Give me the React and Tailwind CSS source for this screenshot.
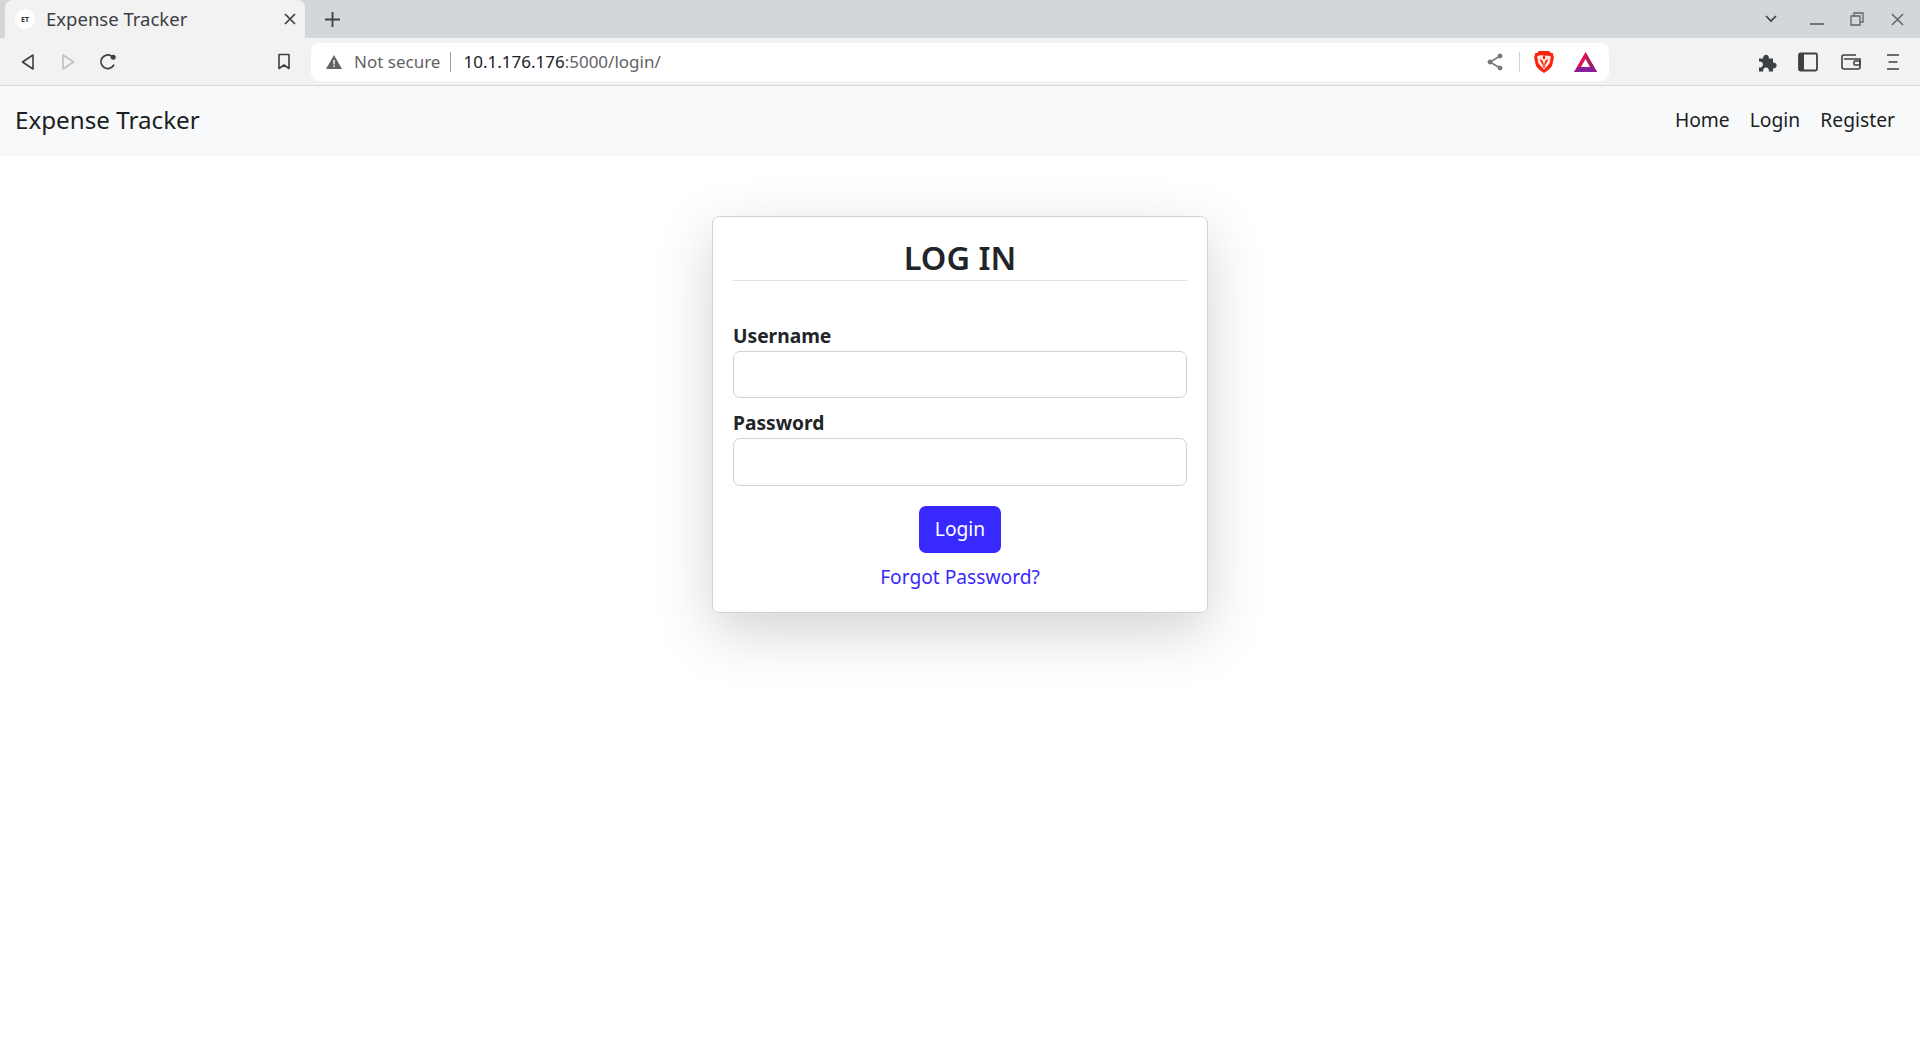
import React from "react";

const Back = () => (
  <svg width="16" height="18" viewBox="0 0 16 18" fill="none" stroke="#3c4043" strokeWidth="1.6" strokeLinejoin="round"><path d="M13 2 2.5 9 13 16Z" /></svg>
);
const Forward = () => (
  <svg width="16" height="18" viewBox="0 0 16 18" fill="none" stroke="#bdbfc1" strokeWidth="1.6" strokeLinejoin="round"><path d="M3 2 13.5 9 3 16Z" /></svg>
);
const Reload = () => (
  <svg width="20" height="20" viewBox="0 0 20 20" fill="none"><path d="M15.6 13.2A6.8 6.8 0 1 1 13.6 4.2" stroke="#3c4043" strokeWidth="1.7" strokeLinecap="round" /><circle cx="15.2" cy="5.2" r="2.5" fill="#3c4043" /></svg>
);
const Bookmark = () => (
  <svg width="14" height="17" viewBox="0 0 14 17" fill="none" stroke="#3c4043" strokeWidth="1.6" strokeLinejoin="round"><path d="M2 1.5h10v14L7 12l-5 3.5Z" /></svg>
);
const Warn = () => (
  <svg width="16" height="14" viewBox="0 0 16 14"><path d="M8 0 16 14H0Z" fill="#5f6368" /><path d="M7.3 5h1.4v4.5H7.3ZM7.3 10.5h1.4V12H7.3Z" fill="#fff" /></svg>
);
const Share = () => (
  <svg width="16" height="18" viewBox="0 0 16 18" fill="#757575" stroke="#757575"><path d="M13 3 3 9l10 6" fill="none" strokeWidth="1.5" /><circle cx="13" cy="3" r="2" /><circle cx="3" cy="9" r="2" /><circle cx="13" cy="15" r="2" /></svg>
);
const Brave = () => (
  <svg width="20" height="22" viewBox="0 0 20 22">
    <path d="M5 0h10l2 2 2.500.5-.5 2 1 1.500-2 9-3 3.500L10 22l-5-3.500L2 15 0 6l1-1.500-.5-2L3 2Z" fill="#f5230f" />
    <path d="M3 5.500c2.500-1.500 4.500-1.500 7-1s4.500-.5 7 1l-1.500 7-3 3.500L10 18.500l-2.500-2.500-3-3.500Z" fill="#ffe3da" />
    <path d="M5.500 8l3 1.500L10 14.500l1.500-5 3-1.500-2 4L10 15.500 7.500 12ZM9 4.500h2V8H9ZM8 15.500h4l-2 1.500Z" fill="#f5230f" />
  </svg>
);
const Bat = () => (
  <svg width="23" height="20" viewBox="0 0 23 20">
    <path d="M11.500 0 23 20H0Z" fill="#e0124f" />
    <path d="M11.500 0 23 20H16Z" fill="#9e1f63" />
    <path d="M0 20l3.800-5h15.400l3.800 5Z" fill="#8a1c9b" />
    <path d="M11.500 7 16 15H7Z" fill="#fff" />
  </svg>
);
const Puzzle = () => (
  <svg width="20" height="20" viewBox="0 0 20 20" fill="#3c4043"><path d="M1 6.500h4.200a2.900 2.900 0 1 1 5.600 0H15v4.200a2.900 2.900 0 1 1 0 5.600V19.500h-4.300a2.900 2.900 0 1 0-5.400 0H1v-4.300a2.900 2.900 0 1 0 0-5.400Z" /></svg>
);
const Sidebar = () => (
  <svg width="20" height="20" viewBox="0 0 20 20"><rect x="1" y="1.500" width="18" height="17" rx="1.500" fill="none" stroke="#3c4043" strokeWidth="1.800" /><rect x="1" y="1.500" width="5" height="17" fill="#3c4043" /></svg>
);
const Wallet = () => (
  <svg width="20" height="18" viewBox="0 0 20 18" fill="none" stroke="#3c4043" strokeWidth="1.600"><path d="M15 2H3a2 2 0 0 0-2 2v10a2 2 0 0 0 2 2h14a2 2 0 0 0 2-2V6H3" /><rect x="13" y="8" width="6" height="4" rx="1" /></svg>
);
const Menu = () => (
  <svg width="12" height="16" viewBox="0 0 12 16" stroke="#3c4043" strokeWidth="1.700"><path d="M0 1h12M1.500 8h9M0 15h12" /></svg>
);

export default function App() {
  return (
    <div className="min-h-[1046px] bg-white font-['Noto_Sans',sans-serif] text-[#212529]">
      <div className="flex h-[38px] items-end bg-[#d3d7da] pl-[5px]">
        <div className="flex h-[38px] w-[300px] items-center rounded-t-[8px] bg-[#f2f2f2] pl-[10px] pr-[9px]">
          <div className="flex h-[20px] w-[20px] items-center justify-center rounded-full bg-white text-[7px] font-bold leading-none text-[#333]">ET</div>
          <span className="ml-[11px] flex-1 text-[18.500px] leading-none text-[#3c4043]">Expense Tracker</span>
          <svg width="12" height="12" viewBox="0 0 12 12" stroke="#3c4043" strokeWidth="1.700"><path d="M1 1l10 10M11 1 1 11" /></svg>
        </div>
        <div className="ml-[20px] flex h-[38px] items-center">
          <svg width="15" height="15" viewBox="0 0 15 15" stroke="#3c4043" strokeWidth="1.800"><path d="M7.500 0v15M0 7.500h15" /></svg>
        </div>
        <div className="flex h-[38px] flex-1 items-center justify-end">
          <svg width="12" height="8" viewBox="0 0 12 8" fill="none" stroke="#3c4043" strokeWidth="1.700"><path d="M1 1l5 5 5-5" /></svg>
          <div className="ml-[33px] mt-[10px] h-[2px] w-[14px] bg-[#70757a]" />
          <svg className="ml-[26px]" width="14" height="14" viewBox="0 0 14 14" fill="none" stroke="#5f6368" strokeWidth="1.300"><path d="M4 4V1h9v9h-3M1 4h9v9H1Z" /></svg>
          <svg className="ml-[27px] mr-[16px]" width="13" height="13" viewBox="0 0 14 14" stroke="#5f6368" strokeWidth="1.600"><path d="M1 1l12 12M13 1 1 13" /></svg>
        </div>
      </div>

      <div className="flex h-[48px] items-center border-b border-[#d9d9d9] bg-[#f2f2f2]">
        <div className="flex w-[311px] items-center">
          <div className="ml-[20px] flex w-[16px] justify-center"><Back /></div>
          <div className="ml-[24px] flex w-[16px] justify-center"><Forward /></div>
          <div className="ml-[22px] flex w-[20px] justify-center"><Reload /></div>
          <div className="ml-[159px] flex w-[14px] justify-center"><Bookmark /></div>
        </div>
        <div className="flex h-[38px] w-[1298px] items-center rounded-[8px] bg-white pl-[15px] pr-[12px]">
          <Warn />
          <span className="ml-[12px] text-[17px] text-[#5f6368]">Not secure</span>
          <div className="ml-[10px] h-[20px] w-px bg-[#9aa0a6]" />
          <span className="ml-[12px] flex-1 text-[17px]"><span className="text-[#202124]">10.1.176.176</span><span className="text-[#5f6368]">:5000/login/</span></span>
          <Share />
          <div className="ml-[16px] h-[20px] w-px bg-[#d0d3d6]" />
          <div className="ml-[14px]"><Brave /></div>
          <div className="ml-[20px]"><Bat /></div>
        </div>
        <div className="flex flex-1 items-center pl-[149px]">
          <div className="flex w-[20px] justify-center"><Puzzle /></div>
          <div className="ml-[20px] flex w-[20px] justify-center"><Sidebar /></div>
          <div className="ml-[23px] flex w-[20px] justify-center"><Wallet /></div>
          <div className="ml-[26px] flex w-[12px] justify-center"><Menu /></div>
        </div>
      </div>

      <nav className="flex h-[70px] items-center justify-between bg-[#f8f9fa] pl-[15px] pr-[25px]">
        <span className="pb-[2px] text-[24.200px] text-[#1c1f23]">Expense Tracker</span>
        <div className="flex gap-[20px] pb-[1px] text-[19.300px] text-[#1c1f23]">
          <span>Home</span>
          <span>Login</span>
          <span>Register</span>
        </div>
      </nav>

      <div className="flex justify-center pt-[60px]">
        <div className="h-[397px] w-[496px] rounded-[7px] border border-[#d0d2d4] bg-white px-[20px] pt-[20px] shadow-[0_19px_58px_rgba(0,0,0,0.175)]">
          <h1 className="h-[44px] border-b border-[#dee2e6] text-center text-[32.500px] font-semibold leading-[42px] text-[#212529]">LOG IN</h1>
          <form>
            <label className="mt-[43px] block h-[27px] text-[19.200px] font-bold leading-[24px]">Username</label>
            <input aria-label="Username" className="block h-[47px] w-full rounded-[7px] border border-[#ced4da] bg-white" />
            <label className="mt-[10px] block h-[30px] text-[19.200px] font-bold leading-[29px]">Password</label>
            <input aria-label="Password" className="block h-[48px] w-full rounded-[7px] border border-[#ced4da] bg-white" />
            <div className="mt-[20px] flex justify-center">
              <button type="button" className="h-[47px] w-[82px] rounded-[7px] bg-[#3729ff] text-[19.200px] text-white">Login</button>
            </div>
            <div className="mt-[9px] text-center text-[19.200px] leading-[29px] text-[#3729ff]">Forgot Password?</div>
          </form>
        </div>
      </div>
    </div>
  );
}
